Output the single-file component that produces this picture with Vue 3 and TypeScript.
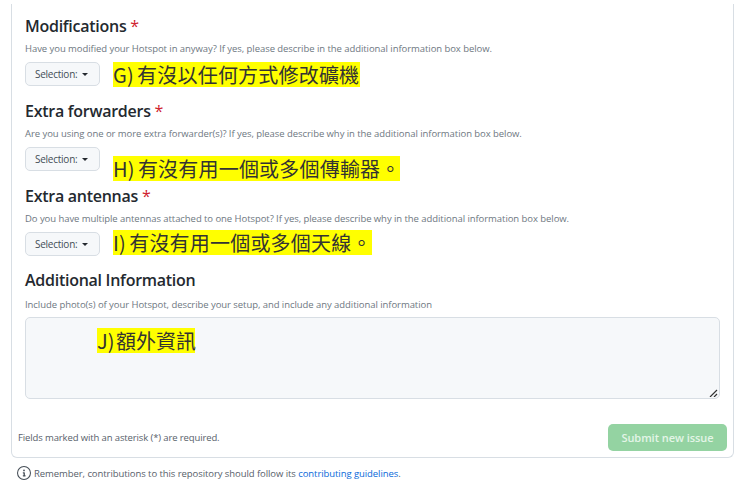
<script setup lang="ts">
interface Field {
  title: string
  note: string
  mark: string
  cls: string
}
const fields: Field[] = [
  { title: 'Modifications', note: 'Have you modified your Hotspot in anyway? If yes, please describe in the additional information box below.', mark: 'G) 有沒以任何方式修改礦機', cls: 'm-g' },
  { title: 'Extra forwarders', note: 'Are you using one or more extra forwarder(s)? If yes, please describe why in the additional information box below.', mark: 'H) 有沒有用一個或多個傳輸器。', cls: 'm-h' },
  { title: 'Extra antennas', note: 'Do you have multiple antennas attached to one Hotspot? If yes, please describe why in the additional information box below.', mark: 'I) 有沒有用一個或多個天線。', cls: 'm-i' },
]
</script>

<template>
  <div class="page">
    <div class="card">
      <section v-for="f in fields" :key="f.title" class="field">
        <h3 class="title">{{ f.title }} <span class="req">*</span></h3>
        <p class="note">{{ f.note }}</p>
        <div class="select">Selection: <i class="caret"></i></div>
        <mark class="mark" :class="f.cls">{{ f.mark }}</mark>
      </section>
      <section class="field info">
        <h3 class="title">Additional Information</h3>
        <p class="note">Include photo(s) of your Hotspot, describe your setup, and include any additional information</p>
        <div class="area">
          <mark class="mark m-j">J) 額外資訊</mark>
          <svg class="grip" width="9" height="8" viewBox="0 0 9 8"><path d="M1 8 8 1M5 8 8 5" stroke="#333" stroke-width="1.2" fill="none" /></svg>
        </div>
      </section>
      <div class="actions">
        <span class="req-note">Fields marked with an asterisk (*) are required.</span>
        <button class="submit" type="button">Submit new issue</button>
      </div>
    </div>
    <div class="remember">
      <svg width="14" height="14" viewBox="0 0 16 16"><path fill="#444d56" d="M8 1.2a6.8 6.8 0 1 0 0 13.6A6.8 6.8 0 0 0 8 1.2ZM0 8a8 8 0 1 1 16 0A8 8 0 0 1 0 8Zm6.5-.25A.75.75 0 0 1 7.25 7h1a.75.75 0 0 1 .75.75v2.75h.25a.75.75 0 0 1 0 1.5h-2a.75.75 0 0 1 0-1.5h.25v-2h-.25a.75.75 0 0 1-.75-.75ZM8 6a1 1 0 1 1 0-2 1 1 0 0 1 0 2Z" /></svg>
      <span>Remember, contributions to this repository should follow its <a class="link">contributing guidelines</a>.</span>
    </div>
  </div>
</template>

<style>
html, body { margin: 0; background: #fff; }
</style>

<style scoped>
.page {
  width: 740px;
  height: 484px;
  box-sizing: border-box;
  padding: 4px 6px 0 11px;
  overflow: hidden;
  font-family: "Open Sans", "Noto Sans", sans-serif;
  color: #24292f;
}
.card {
  height: 454px;
  box-sizing: border-box;
  border: 1px solid #d8dee4;
  border-top: 0;
  border-radius: 0 0 6px 6px;
  padding: 13px 6px 0 13px;
  position: relative;
}
.field {
  height: 85px;
  position: relative;
}
.title {
  margin: 0;
  font-size: 16px;
  line-height: 19px;
  font-weight: 600;
  letter-spacing: -0.27px;
}
.req { color: #cf222e; font-weight: 400; }
.note {
  margin: 6px 0 0;
  font-size: 9.5px;
  line-height: 13px;
  color: #6e7781;
  letter-spacing: -0.06px;
}
.select {
  width: 75px;
  height: 24px;
  margin-top: 7px;
  box-sizing: border-box;
  display: flex;
  align-items: center;
  gap: 5px;
  padding-left: 9px;
  border: 1px solid #d8dee4;
  border-radius: 5px;
  background: #f6f8fa;
  font-size: 10px;
  color: #444d56;
  letter-spacing: -0.25px;
}
.caret {
  width: 0;
  height: 0;
  border: 3.5px solid transparent;
  border-top: 3.5px solid #24292f;
  border-bottom: 0;
}
.mark {
  position: absolute;
  background: #ffff00;
  color: #333;
  font-family: "Noto Sans CJK TC", sans-serif;
  font-size: 20px;
  line-height: 25px;
  height: 25px;
  letter-spacing: 0.2px;
  word-spacing: -1.5px;
  white-space: nowrap;
  display: block;
}
.m-g { left: 88px; top: 45px; width: 247px; }
.m-h { left: 88px; top: 54px; width: 287px; }
.m-i { left: 88px; top: 43px; width: 259px; }
.m-j { left: 71px; top: 10px; width: 98px; letter-spacing: 0; word-spacing: -3px; }
.info { height: auto; margin-top: -1px; }
.info .note { margin-top: 8px; }
.area {
  margin-top: 6px;
  width: 695px;
  height: 82px;
  box-sizing: border-box;
  border: 1px solid #d8dee4;
  border-radius: 5px;
  background: #f6f8fa;
  position: relative;
}
.grip { position: absolute; right: 1px; bottom: 1px; }
.actions {
  display: flex;
  align-items: center;
  justify-content: space-between;
  margin: 25px 0 0 -7px;
}
.req-note {
  font-size: 9.5px;
  letter-spacing: -0.12px;
  color: #57606a;
}
.submit {
  width: 119px;
  height: 27px;
  padding: 0;
  border: 0;
  border-radius: 5px;
  background: #94d3a2;
  color: #e3f5e7;
  font: 600 11px "Open Sans", sans-serif;
  letter-spacing: -0.05px;
}
.remember {
  display: flex;
  align-items: center;
  gap: 3px;
  margin: 8px 0 0 6px;
  font-size: 9.5px;
  letter-spacing: -0.07px;
  color: #57606a;
}
.link { color: #0969da; }
</style>
